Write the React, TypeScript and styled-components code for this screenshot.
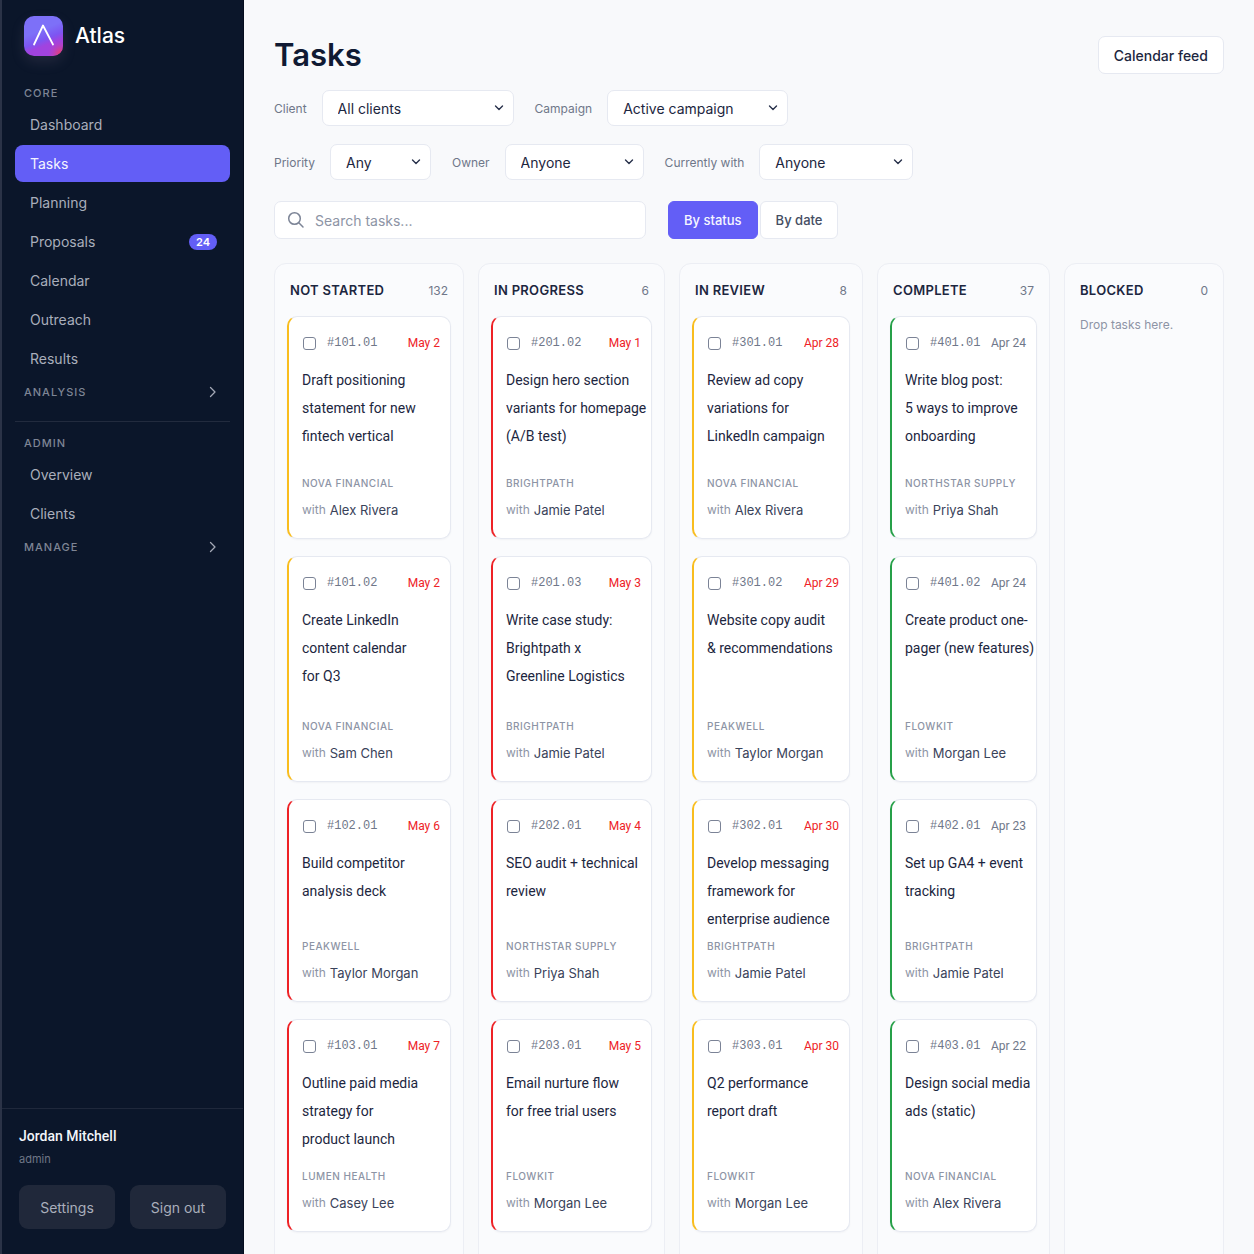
import React, { useState } from "react";
import styled, { createGlobalStyle } from "styled-components";

const color = {
  navy: "#0b162a",
  ink: "#101a33",
  text: "#1c2640",
  muted: "#6f7789",
  faint: "#8d94a5",
  line: "#e6e9f1",
  page: "#f8f9fb",
  accent: "#635ef6",
  red: "#ee2226",
  amber: "#f9bd1e",
  green: "#26a048",
};

const narrow = `Roboto, Inter, "Liberation Sans", sans-serif`;

const GlobalStyle = createGlobalStyle`
  *, *::before, *::after { box-sizing: border-box; }
  body {
    margin: 0;
    background: ${color.page};
    color: ${color.ink};
    font-family: Inter, "Liberation Sans", sans-serif;
    font-size: 14px;
  }
  button, input, select { font: inherit; color: inherit; }
  h1, h2, h3, p, ul { margin: 0; padding: 0; }
  ul { list-style: none; }
`;

const Shell = styled.div`
  display: grid;
  grid-template-columns: 244px minmax(0, 1fr);
  height: 100vh;
`;

/* Sidebar */

const Sidebar = styled.aside`
  display: flex;
  flex-direction: column;
  min-height: 0;
  background: ${color.navy};
  border-left: 2px solid #2b3347;
  border-right: 1px solid #050d1e;
`;

const Brand = styled.div`
  display: flex;
  align-items: center;
  gap: 12px;
  padding: 16px 22px 0;
  color: #fff;
  font-size: 21px;
  font-weight: 500;
  line-height: 40px;
`;

const LogoMark = styled.svg`
  width: 39px;
  height: 40px;
  border-radius: 10px;
  box-shadow: 0 6px 14px rgba(150, 130, 160, 0.16);
`;

const Nav = styled.nav`
  display: flex;
  flex: 1;
  flex-direction: column;
  padding: 27px 13px 0;
`;

const GroupLabel = styled.h2`
  padding: 0 9px;
  color: #7e8595;
  font-size: 11px;
  font-weight: 500;
  line-height: 20px;
  letter-spacing: 1px;
`;

const NavList = styled.ul`
  display: flex;
  flex-direction: column;
  gap: 2px;
  padding: 3px 0 5px;
`;

const NavLink = styled.a<{ $active?: boolean }>`
  display: flex;
  align-items: center;
  justify-content: space-between;
  height: 37px;
  padding: 0 13px 0 15px;
  border-radius: 8px;
  background: ${(p) => (p.$active ? color.accent : "transparent")};
  color: ${(p) => (p.$active ? "#f4f4ff" : "#a9aebb")};
  text-decoration: none;
`;

const Badge = styled.span`
  min-width: 28px;
  border-radius: 8px;
  background: ${color.accent};
  color: #fff;
  font-size: 11px;
  font-weight: 600;
  line-height: 16px;
  text-align: center;
`;

const GroupToggle = styled.button`
  display: flex;
  align-items: center;
  justify-content: space-between;
  height: 20px;
  padding: 0 13px 0 9px;
  border: 0;
  background: none;
  color: #7e8595;
  font-size: 11px;
  font-weight: 500;
  letter-spacing: 1px;
`;

const NavDivider = styled.hr`
  width: 100%;
  margin: 19px 0 11px;
  border: 0;
  border-top: 1px solid #222b3e;
`;

const Account = styled.footer`
  padding: 16px 17px 25px;
  border-top: 1px solid #1f283b;
`;

const AccountName = styled.p`
  color: #f3f5fa;
  font-family: ${narrow};
  font-size: 14px;
  font-weight: 500;
  line-height: 22px;
`;

const AccountRole = styled.p`
  padding: 2px 0 16px;
  color: #6f7687;
  font-size: 11px;
  line-height: 20px;
`;

const AccountActions = styled.div`
  display: grid;
  grid-template-columns: 1fr 1fr;
  gap: 15px;
`;

const AccountButton = styled.button`
  height: 44px;
  padding: 0;
  border: 0;
  border-radius: 9px;
  background: #20283a;
  color: #a9aebb;
`;

/* Main */

const Main = styled.main`
  min-width: 0;
  padding: 34px 30px 0;
  overflow-y: auto;
  scrollbar-width: none;
`;

const PageHeader = styled.header`
  display: flex;
  align-items: center;
  justify-content: space-between;
  height: 42px;
`;

const PageTitle = styled.h1`
  font-size: 31px;
  font-weight: 600;
  line-height: 40px;
`;

const OutlineButton = styled.button`
  height: 38px;
  padding: 0 15px;
  border: 1px solid ${color.line};
  border-radius: 7px;
  background: #fff;
  color: ${color.text};
  font-weight: 500;
`;

const Filters = styled.div`
  display: flex;
  flex-direction: column;
  gap: 18px;
  padding-top: 14px;
`;

const FilterRow = styled.div`
  display: flex;
  flex-wrap: wrap;
  gap: 21px;
`;

const FilterLabel = styled.label`
  display: flex;
  align-items: center;
  gap: 15px;
  color: ${color.muted};
  font-size: 12px;
`;

const SelectBox = styled.span<{ $width: number }>`
  position: relative;
  display: block;
  width: ${(p) => p.$width}px;
`;

const Select = styled.select`
  display: block;
  width: 100%;
  height: 36px;
  padding: 0 32px 0 15px;
  appearance: none;
  border: 1px solid ${color.line};
  border-radius: 7px;
  background: #fff;
  color: ${color.text};
  font-size: 14px;
`;

const SelectChevron = styled.svg`
  position: absolute;
  top: 13px;
  right: 10px;
  width: 10px;
  height: 10px;
  pointer-events: none;
`;

const Tools = styled.div`
  display: flex;
  gap: 22px;
  padding: 21px 0 24px;
`;

const SearchField = styled.label`
  display: flex;
  align-items: center;
  gap: 10px;
  width: 372px;
  height: 38px;
  padding: 0 12px;
  border: 1px solid ${color.line};
  border-radius: 7px;
  background: #fff;
  color: ${color.muted};
`;

const SearchInput = styled.input`
  flex: 1;
  min-width: 0;
  padding: 0;
  border: 0;
  outline: 0;
  background: none;
  &::placeholder { color: ${color.faint}; opacity: 1; }
`;

const Segmented = styled.div`
  display: flex;
  gap: 2px;
`;

const Segment = styled.button<{ $active: boolean }>`
  height: 38px;
  padding: 0 15px;
  border: 1px solid ${(p) => (p.$active ? color.accent : color.line)};
  border-radius: 6px;
  background: ${(p) => (p.$active ? color.accent : "#fff")};
  color: ${(p) => (p.$active ? "#f6f6ff" : "#454e63")};
  font-size: 13px;
  font-weight: 500;
`;

/* Board */

const Board = styled.div`
  display: grid;
  grid-template-columns: 190fr 187fr 184fr 173fr 160fr;
  gap: 14px;
`;

const Column = styled.section`
  min-width: 0;
  padding: 0 12px 40px;
  border: 1px solid #eceef4;
  border-radius: 12px;
  background: #fafbfd;
`;

const ColumnHeader = styled.header`
  display: flex;
  align-items: center;
  justify-content: space-between;
  height: 52px;
  padding: 0 3px;
`;

const ColumnTitle = styled.h2`
  color: ${color.text};
  font-size: 13px;
  font-weight: 600;
  letter-spacing: 0.3px;
`;

const ColumnCount = styled.span`
  color: ${color.muted};
  font-size: 12px;
`;

const EmptyNote = styled.p`
  padding: 0 3px;
  color: ${color.faint};
  font-size: 12px;
  line-height: 18px;
`;

const CardList = styled.ul`
  display: grid;
  grid-template-rows:
    minmax(223px, auto) minmax(226px, auto)
    minmax(203px, auto) minmax(213px, auto);
  gap: 17px;
`;

const Card = styled.li<{ $edge: string }>`
  display: flex;
  flex-direction: column;
  min-width: 0;
  padding: 16px 10px 15px 13px;
  border: 1px solid ${color.line};
  border-left: 2px solid ${(p) => p.$edge};
  border-radius: 10px;
  background: #fff;
  box-shadow: 0 1px 2px rgba(20, 30, 60, 0.04);
`;

const CardMeta = styled.div`
  display: flex;
  align-items: center;
  height: 20px;
  font-size: 12px;
  line-height: 20px;
  white-space: nowrap;
`;

const CheckLabel = styled.label`
  display: flex;
  align-items: center;
  gap: 11px;
  color: ${color.muted};
  font-family: "Liberation Mono", monospace;
`;

const Check = styled.input`
  width: 13px;
  height: 13px;
  margin: 0 0 0 1px;
  appearance: none;
  border: 1px solid #7b8396;
  border-radius: 3px;
  background: #fff;
  &:checked { background: ${color.accent}; border-color: ${color.accent}; }
`;

const DueDate = styled.time<{ $late: boolean }>`
  margin-left: auto;
  color: ${(p) => (p.$late ? color.red : color.muted)};
  font-family: ${narrow};
  font-size: 12px;
`;

const CardTitle = styled.h3`
  padding-top: 13px;
  color: ${color.text};
  font-family: ${narrow};
  font-size: 14px;
  font-weight: 400;
  line-height: 28px;
  white-space: pre;
`;

const CardFooter = styled.div`
  margin-top: auto;
  white-space: nowrap;
`;

const ClientName = styled.p`
  color: ${color.faint};
  font-size: 10px;
  font-weight: 500;
  line-height: 27px;
  letter-spacing: 0.5px;
`;

const Holder = styled.p`
  display: flex;
  gap: 4px;
  color: #3a435a;
  font-size: 13px;
  line-height: 26px;
`;

const HolderPrefix = styled.span`
  color: ${color.faint};
  font-size: 12px;
`;

type Task = {
  id: string;
  due: string;
  title: string;
  client: string;
  holder: string;
  edge: string;
};

const task = (
  id: string,
  due: string,
  title: string,
  client: string,
  holder: string,
  edge: string
): Task => ({ id, due, title, client, holder, edge });

const { amber, red, green } = color;

const columns: { name: string; count: number; late: boolean; tasks: Task[] }[] = [
  {
    name: "NOT STARTED",
    count: 132,
    late: true,
    tasks: [
      task("#101.01", "May 2", "Draft positioning\nstatement for new\nfintech vertical", "NOVA FINANCIAL", "Alex Rivera", amber),
      task("#101.02", "May 2", "Create LinkedIn\ncontent calendar\nfor Q3", "NOVA FINANCIAL", "Sam Chen", amber),
      task("#102.01", "May 6", "Build competitor\nanalysis deck", "PEAKWELL", "Taylor Morgan", red),
      task("#103.01", "May 7", "Outline paid media\nstrategy for\nproduct launch", "LUMEN HEALTH", "Casey Lee", red),
    ],
  },
  {
    name: "IN PROGRESS",
    count: 6,
    late: true,
    tasks: [
      task("#201.02", "May 1", "Design hero section\nvariants for homepage\n(A/B test)", "BRIGHTPATH", "Jamie Patel", red),
      task("#201.03", "May 3", "Write case study:\nBrightpath x\nGreenline Logistics", "BRIGHTPATH", "Jamie Patel", red),
      task("#202.01", "May 4", "SEO audit + technical\nreview", "NORTHSTAR SUPPLY", "Priya Shah", red),
      task("#203.01", "May 5", "Email nurture flow\nfor free trial users", "FLOWKIT", "Morgan Lee", red),
    ],
  },
  {
    name: "IN REVIEW",
    count: 8,
    late: true,
    tasks: [
      task("#301.01", "Apr 28", "Review ad copy\nvariations for\nLinkedIn campaign", "NOVA FINANCIAL", "Alex Rivera", amber),
      task("#301.02", "Apr 29", "Website copy audit\n& recommendations", "PEAKWELL", "Taylor Morgan", amber),
      task("#302.01", "Apr 30", "Develop messaging\nframework for\nenterprise audience", "BRIGHTPATH", "Jamie Patel", amber),
      task("#303.01", "Apr 30", "Q2 performance\nreport draft", "FLOWKIT", "Morgan Lee", amber),
    ],
  },
  {
    name: "COMPLETE",
    count: 37,
    late: false,
    tasks: [
      task("#401.01", "Apr 24", "Write blog post:\n5 ways to improve\nonboarding", "NORTHSTAR SUPPLY", "Priya Shah", green),
      task("#401.02", "Apr 24", "Create product one-\npager (new features)", "FLOWKIT", "Morgan Lee", green),
      task("#402.01", "Apr 23", "Set up GA4 + event\ntracking", "BRIGHTPATH", "Jamie Patel", green),
      task("#403.01", "Apr 22", "Design social media\nads (static)", "NOVA FINANCIAL", "Alex Rivera", green),
    ],
  },
  { name: "BLOCKED", count: 0, late: false, tasks: [] },
];

const coreLinks = ["Dashboard", "Tasks", "Planning", "Proposals", "Calendar", "Outreach", "Results"];

function Logo() {
  return (
    <LogoMark viewBox="0 0 39 40" aria-hidden="true">
      <defs>
        <linearGradient id="logo-base" x1="0.3" y1="0" x2="0.7" y2="1">
          <stop offset="0.35" stopColor="#7d70f8" />
          <stop offset="0.58" stopColor="#7d55f2" />
          <stop offset="0.72" stopColor="#a143df" />
        </linearGradient>
        <radialGradient id="logo-warm" cx="0.95" cy="0.95" r="0.35">
          <stop offset="0" stopColor="#f2405a" />
          <stop offset="1" stopColor="#c23cc8" stopOpacity="0" />
        </radialGradient>
      </defs>
      <rect width="39" height="40" fill="url(#logo-base)" />
      <rect width="39" height="40" fill="url(#logo-warm)" />
      <path d="M10 28.500 L19 9.500 L29 28.500" fill="none" stroke="#fff" strokeWidth="1.800" strokeLinecap="round" strokeLinejoin="round" />
    </LogoMark>
  );
}

function ChevronRight() {
  return (
    <svg width="8" height="12" viewBox="0 0 8 12" fill="none" stroke="#a4a9b6" strokeWidth="1.300" strokeLinecap="round" strokeLinejoin="round" aria-hidden="true">
      <path d="M1.500 1.500 L6 6 L1.500 10.500" />
    </svg>
  );
}

function Filter({ label, value, width }: { label: string; value: string; width: number }) {
  return (
    <FilterLabel>
      {label}
      <SelectBox $width={width}>
        <Select defaultValue={value}>
          <option>{value}</option>
        </Select>
        <SelectChevron viewBox="0 0 10 10" fill="none" stroke="#27304a" strokeWidth="1.400" strokeLinecap="round" strokeLinejoin="round" aria-hidden="true">
          <path d="M1.500 3 L5 6.500 L8.500 3" />
        </SelectChevron>
      </SelectBox>
    </FilterLabel>
  );
}

function TaskCard({ item, late }: { item: Task; late: boolean }) {
  return (
    <Card $edge={item.edge}>
      <CardMeta>
        <CheckLabel>
          <Check type="checkbox" />
          {item.id}
        </CheckLabel>
        <DueDate $late={late}>{item.due}</DueDate>
      </CardMeta>
      <CardTitle>{item.title}</CardTitle>
      <CardFooter>
        <ClientName>{item.client}</ClientName>
        <Holder>
          <HolderPrefix>with</HolderPrefix>
          {item.holder}
        </Holder>
      </CardFooter>
    </Card>
  );
}

export default function App() {
  const [view, setView] = useState("By status");

  return (
    <>
      <GlobalStyle />
      <Shell>
        <Sidebar>
          <Brand>
            <Logo />
            Atlas
          </Brand>
          <Nav>
            <GroupLabel>CORE</GroupLabel>
            <NavList>
              {coreLinks.map((name) => (
                <li key={name}>
                  <NavLink href="#" $active={name === "Tasks"}>
                    {name}
                    {name === "Proposals" && <Badge>24</Badge>}
                  </NavLink>
                </li>
              ))}
            </NavList>
            <GroupToggle type="button">
              ANALYSIS
              <ChevronRight />
            </GroupToggle>
            <NavDivider />
            <GroupLabel>ADMIN</GroupLabel>
            <NavList>
              <li><NavLink href="#">Overview</NavLink></li>
              <li><NavLink href="#">Clients</NavLink></li>
            </NavList>
            <GroupToggle type="button">
              MANAGE
              <ChevronRight />
            </GroupToggle>
          </Nav>
          <Account>
            <AccountName>Jordan Mitchell</AccountName>
            <AccountRole>admin</AccountRole>
            <AccountActions>
              <AccountButton type="button">Settings</AccountButton>
              <AccountButton type="button">Sign out</AccountButton>
            </AccountActions>
          </Account>
        </Sidebar>

        <Main>
          <PageHeader>
            <PageTitle>Tasks</PageTitle>
            <OutlineButton type="button">Calendar feed</OutlineButton>
          </PageHeader>

          <Filters>
            <FilterRow>
              <Filter label="Client" value="All clients" width={192} />
              <Filter label="Campaign" value="Active campaign" width={181} />
            </FilterRow>
            <FilterRow>
              <Filter label="Priority" value="Any" width={101} />
              <Filter label="Owner" value="Anyone" width={139} />
              <Filter label="Currently with" value="Anyone" width={154} />
            </FilterRow>
          </Filters>

          <Tools>
            <SearchField>
              <svg width="18" height="18" viewBox="0 0 18 18" fill="none" stroke="#7c8496" strokeWidth="1.500" strokeLinecap="round" aria-hidden="true">
                <circle cx="7.500" cy="7.500" r="5.800" />
                <path d="M11.800 11.800 L16 16" />
              </svg>
              <SearchInput type="search" placeholder="Search tasks..." aria-label="Search tasks" />
            </SearchField>
            <Segmented>
              {["By status", "By date"].map((name) => (
                <Segment key={name} type="button" $active={view === name} onClick={() => setView(name)}>
                  {name}
                </Segment>
              ))}
            </Segmented>
          </Tools>

          <Board>
            {columns.map((column) => (
              <Column key={column.name}>
                <ColumnHeader>
                  <ColumnTitle>{column.name}</ColumnTitle>
                  <ColumnCount>{column.count}</ColumnCount>
                </ColumnHeader>
                {column.tasks.length === 0 ? (
                  <EmptyNote>Drop tasks here.</EmptyNote>
                ) : (
                  <CardList>
                    {column.tasks.map((item) => (
                      <TaskCard key={item.id} item={item} late={column.late} />
                    ))}
                  </CardList>
                )}
              </Column>
            ))}
          </Board>
        </Main>
      </Shell>
    </>
  );
}
